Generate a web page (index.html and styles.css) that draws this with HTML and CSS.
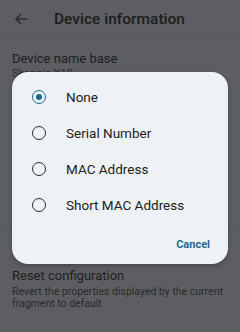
FILE: index.html
```html
<!DOCTYPE html>
<html>
<head>
<meta charset="utf-8">
<link rel="stylesheet" href="styles.css">
</head>
<body>
<div class="screen">
  <header class="appbar">
    <svg class="back" width="14" height="14" viewBox="0 0 14 14"><path d="M13 7H2M7 2L2 7l5 5" fill="none" stroke="#2c2d30" stroke-width="1.6"/></svg>
    <span class="appbar-title">Device information</span>
  </header>
  <div class="pref">
    <div class="pref-title">Device name base</div>
    <div class="pref-sub">Skanpie X10</div>
  </div>
  <div class="spacer"></div>
  <div class="pref pref-last">
    <div class="pref-title">Reset configuration</div>
    <div class="pref-desc">Revert the properties displayed by the current fragment to default</div>
  </div>

  <div class="dialog">
    <div class="options">
      <div class="option"><span class="radio checked"></span><span class="label">None</span></div>
      <div class="option"><span class="radio"></span><span class="label">Serial Number</span></div>
      <div class="option"><span class="radio"></span><span class="label">MAC Address</span></div>
      <div class="option"><span class="radio"></span><span class="label">Short MAC Address</span></div>
    </div>
    <div class="actions"><span class="btn">Cancel</span></div>
  </div>
</div>
</body>
</html>
```

FILE: styles.css
```css
* { box-sizing: border-box; }
html, body { margin: 0; padding: 0; }
body {
  width: 240px;
  height: 332px;
  overflow: hidden;
  background: #5d5e61;
  font-family: Roboto, "Noto Sans", sans-serif;
  color: #1f2023;
}
.screen {
  position: relative;
  width: 240px;
  height: 332px;
  display: flex;
  flex-direction: column;
}
.appbar {
  height: 38px;
  display: flex;
  align-items: center;
  border-bottom: 1px solid #57585b;
  flex-shrink: 0;
}
.back { margin-left: 14px; margin-right: 26px; }
.appbar-title {
  font-size: 15.5px;
  font-weight: 500;
  color: #1c1d20;
}
.pref { padding: 13px 12px 0; }
.pref-title { font-size: 13px; line-height: 16px; color: #1f2023; }
.pref-sub { font-size: 11px; line-height: 14px; color: #2a2b2e; }
.spacer { flex: 0 0 150px; border-bottom: 1px solid #56575a; }
.pref-last { padding-top: 37px; }
.pref-desc { font-size: 10.5px; line-height: 12px; color: #2a2b2e; margin-top: 2px; }

.dialog {
  position: absolute;
  left: 12px;
  top: 72px;
  width: 216px;
  height: 192px;
  border-radius: 16px;
  background: #eef1f6;
  box-shadow: 0 2px 4px rgba(0,0,0,0.25);
  display: flex;
  flex-direction: column;
}
.options { padding-top: 7px; }
.option {
  height: 36px;
  display: flex;
  align-items: center;
  padding-left: 20px;
}
.radio {
  width: 14px;
  height: 14px;
  border-radius: 50%;
  border: 1.8px solid #2a2b2f;
  margin-right: 20px;
  flex-shrink: 0;
  display: flex;
  align-items: center;
  justify-content: center;
}
.radio.checked { border-color: #1e6592; }
.radio.checked::after {
  content: "";
  width: 6px;
  height: 6px;
  border-radius: 50%;
  background: #1e6592;
}
.label { font-size: 13.5px; color: #1c1d20; }
.actions {
  margin-top: auto;
  display: flex;
  justify-content: flex-end;
  padding: 0 18px 12px;
}
.btn { font-size: 11px; font-weight: 700; color: #2b6791; line-height: 14px; }
```
